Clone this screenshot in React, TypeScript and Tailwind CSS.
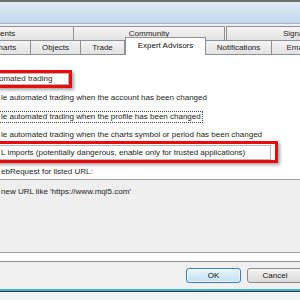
const tabBase =
  "flex items-center justify-center border-t border-r border-[#8e9096] bg-gradient-to-b from-[#f5f5f5] to-[#e2e2e2] text-[#1e1e1e] shrink-0";

const upperTabs = [
  { label: "Events", w: "w-[141px]", extra: "ml-[-67px]" },
  { label: "Community", w: "w-[151px]", extra: "" },
  { label: "Signals", w: "w-[140px]", extra: "ml-[1px] border-l" },
];

const lowerTabs = [
  { label: "Charts", w: "w-[52px]", extra: "ml-[-21px]", selected: false },
  { label: "Objects", w: "w-[50px]", extra: "", selected: false },
  { label: "Trade", w: "w-[44px]", extra: "", selected: false },
  { label: "Expert Advisors", w: "w-[81px]", extra: "", selected: true },
  { label: "Notifications", w: "w-[66px]", extra: "", selected: false },
  { label: "Email", w: "w-[50px]", extra: "", selected: false },
];

export default function App() {
  return (
    <div className="w-[300px] h-[300px] overflow-hidden flex flex-col bg-[#f0f0f0] font-['Liberation_Sans',Arial,sans-serif] text-[8px] leading-[12px] text-[#1c1c1c]">
      {/* window title strip */}
      <div className="h-[24px] shrink-0 border-t-2 border-b border-t-[#6e6e6e] border-b-[#a4b7cc] bg-gradient-to-b from-[#dfeaf6] to-[#c5d8ee]" />

      {/* tab rows */}
      <div className="mt-[2px] h-[14px] flex shrink-0">
        {upperTabs.map((t) => (
          <div key={t.label} className={`${tabBase} ${t.w} ${t.extra} h-[14px]`}>
            {t.label}
          </div>
        ))}
      </div>
      <div className="mt-[-3px] h-[17px] flex items-end shrink-0">
        {lowerTabs.map((t) =>
          t.selected ? (
            <div
              key={t.label}
              className={`${t.w} h-[18px] mb-[-1px] relative z-10 shrink-0 flex items-center justify-center pb-[1px] bg-white border-t border-l border-r border-[#8e9096] text-[#111]`}
            >
              {t.label}
            </div>
          ) : (
            <div key={t.label} className={`${tabBase} ${t.w} ${t.extra} h-[14px]`}>
              {t.label}
            </div>
          )
        )}
      </div>

      {/* panel */}
      <div className="h-[208px] shrink-0 flex flex-col bg-white border-t border-b border-[#8e9096]">
        <div className="mt-[15px] ml-[-10px] w-[82px] h-[18px] border-[3px] border-[#ee0a0a] shadow-[2px_2px_3px_rgba(0,0,0,0.35)]">
          <div className="h-full border border-[#b4b4b4] pl-[5px] flex items-center">omated trading</div>
        </div>

        <div className="mt-[4px] h-[12px] pl-[1px] whitespace-nowrap">le automated trading when the account has been changed</div>

        <div className="mt-[7px] h-[12px] flex">
          <span className="ml-[-2px] h-[12px] pl-[2px] pr-[1px] border border-dotted border-[#444] leading-[10px] whitespace-nowrap">
            le automated trading when the profile has been changed
          </span>
        </div>

        <div className="mt-[6px] h-[12px] pl-[1px] whitespace-nowrap">
          le automated trading when the charts symbol or period has been changed
        </div>

        <div className="ml-[-10px] w-[288px] h-[22px] border-[3px] border-[#ee0a0a] shadow-[2px_2px_3px_rgba(0,0,0,0.35)]">
          <div className="mt-[1px] ml-[1px] w-[277px] h-[15px] border border-[#b8b8b8] pl-[6px] flex items-center whitespace-nowrap">
            L imports (potentially dangerous, enable only for trusted applications)
          </div>
        </div>

        <div className="mt-[3px] h-[12px] pl-[1px] whitespace-nowrap">ebRequest for listed URL:</div>

        <div className="mt-[1px] h-[74px] bg-[#efefef] border-t border-b border-[#a3a5ab] pt-[6px] pl-[1px] whitespace-nowrap">
          new URL like 'https://www.mql5.com'
        </div>
      </div>

      {/* buttons */}
      <div className="h-[27px] shrink-0 flex pt-[6px] pl-[186px] gap-[6px]">
        <button className="w-[55px] h-[15px] shrink-0 rounded-[3px] border border-[#3c7fb1] bg-gradient-to-b from-[#e9f5fc] to-[#bfe1f4] shadow-[inset_0_0_0_1px_rgba(255,255,255,0.6)] text-[#111] leading-[13px]">
          OK
        </button>
        <button className="w-[56px] h-[15px] shrink-0 rounded-[3px] border border-[#8a8a8a] bg-gradient-to-b from-[#f4f4f4] to-[#dcdcdc] text-[#111] leading-[13px]">
          Cancel
        </button>
      </div>

      {/* screen edge */}
      <div className="h-[2px] shrink-0 bg-[#3fb3dc]" />
      <div className="h-[1px] shrink-0 bg-[#3a3a3a]" />
      <div className="flex-1 bg-[#f4f4f4]" />
    </div>
  );
}
